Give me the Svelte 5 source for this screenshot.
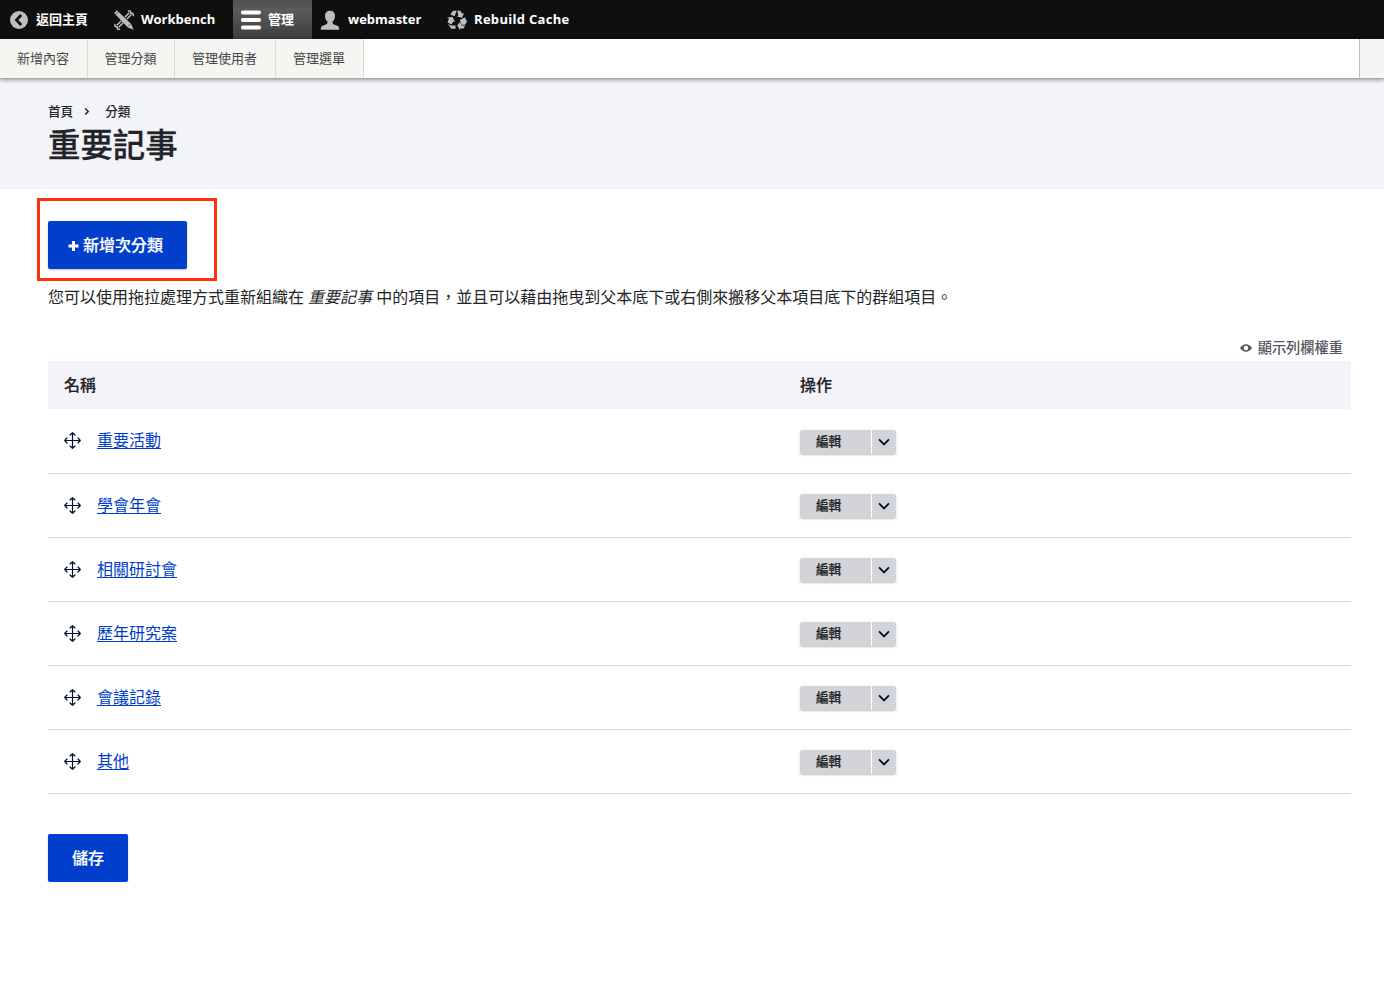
<script>
  const tray = [
    { label: '新增內容', width: 88 },
    { label: '管理分類', width: 87 },
    { label: '管理使用者', width: 101 },
    { label: '管理選單', width: 88 }
  ];
  const terms = ['重要活動', '學會年會', '相關研討會', '歷年研究案', '會議記錄', '其他'];
</script>

<nav class="bar">
  <a class="tab home" href="#home">
    <svg width="20" height="20" viewBox="0 0 20 20"><circle cx="10" cy="10" r="9" fill="#bebebe" /><path d="M12.2 5 7.4 10l4.8 5" fill="none" stroke="#0f0f0f" stroke-width="2.6" /></svg>
    <span>返回主頁</span>
  </a>
  <a class="tab bench" href="#workbench">
    <svg width="20" height="20" viewBox="0 0 20 20">
      <g fill="none" stroke="#bebebe" stroke-width="1.500"><path d="M11 7.100 15.300 2.800M12.900 9 17.200 4.700M14 1.300c1.700-1 3.200-.200 2.600 1.500l.700.700c1.600-.700 2.700.900 1.600 2.500M7.100 11 2.800 15.300M9 12.900 4.700 17.200M1.300 14c-1 1.700-.200 3.200 1.500 2.600l.700.700c-.700 1.600.900 2.700 2.500 1.600" /></g>
      <path d="M2.800.2 17.200 14l2.400 5.800-5.900-2.300L.2 3.100Z" fill="#bebebe" /><path d="m1.700 4.400 2.500-2.500M13.700 16.800l2.900-2.900" stroke="#0f0f0f" stroke-width=".6" />
    </svg>
    <span>Workbench</span>
  </a>
  <a class="tab manage" href="#manage">
    <svg width="20" height="20" viewBox="0 0 20 20" fill="#fff"><rect y=".5" width="20" height="4" rx="1.8" /><rect y="8" width="20" height="4" rx="1.8" /><rect y="15.5" width="20" height="4" rx="1.8" /></svg>
    <span>管理</span>
  </a>
  <a class="tab user" href="#user">
    <svg width="20" height="20" viewBox="0 0 20 20" fill="#bebebe"><path d="M10 .8c-3.3 0-5 2.2-5 5.1 0 2.2.9 4.3 2.3 5.4.5 1.8-.1 2.7-1.4 3.3l-3.2 1.2C1.1 16.5.8 17.6.8 19.7h18.4c0-2.100-.3-3.200-1.900-3.900l-3.200-1.200c-1.300-.600-1.900-1.500-1.400-3.300C14.100 10.200 15 8.100 15 5.900 15 3 13.300.8 10 .8Z" /></svg>
    <span>webmaster</span>
  </a>
  <a class="tab cache" href="#cache">
    <svg width="20" height="20" viewBox="0 0 20 20" fill="#bebebe">
      <path d="M6 .8h3.700L7.600 6.200 3.300 4.500Z" /><path d="M10.300.8h3l2 3 1.900-.7-2.200 4.700-5.200-1.200 1.500-1Z" />
      <path d="m18 7.300 2 4.600-2.200 2.800h-3.400l-1.600-4.800Z" /><path d="m10.200 15.500 3-4v1.900h1.200v2.200h4l-2 3H13v1.600Z" />
      <path d="m0 7.400 5.600-.5 2.400 5.200-1.800-.6-1.600 3.100L.6 12.500l1.300-3.700Z" /><path d="M.8 13.800 3.700 15.500h4.800v3.300H4.200Z" />
    </svg>
    <span>Rebuild Cache</span>
  </a>
</nav>
<div class="tray">
  {#each tray as item}<a href="#tray" style="width: {item.width}px">{item.label}</a>{/each}
  <div class="toggle"></div>
</div>

<header>
  <div class="crumbs"><span>首頁</span><svg width="6" height="8" viewBox="0 0 6 8"><path d="m1.200 1.500 3 3-3 3" fill="none" stroke="#222330" stroke-width="1.500" /></svg><span>分類</span></div>
  <h1>重要記事</h1>
</header>

<main>
  <div class="actions">
    <a class="primary add" href="#add"><svg width="11" height="10" viewBox="0 0 11 10"><path d="M5.500 0v10M.500 5h10" stroke="#fff" stroke-width="3" /></svg><span>新增次分類</span></a>
    <div class="highlight"></div>
  </div>
  <p>您可以使用拖拉處理方式重新組織在 <em>重要記事</em> 中的項目，並且可以藉由拖曳到父本底下或右側來搬移父本項目底下的群組項目。</p>
  <div class="weights">
    <svg width="12" height="8" viewBox="0 0 12 8"><path fill-rule="evenodd" d="M0 4C3-.900 9-.900 12 4 9 8.900 3 8.900 0 4Zm6-2.300a2.300 2.300 0 1 0 0 4.600 2.300 2.300 0 0 0 0-4.600Z" fill="#545560" /></svg>
    <span>顯示列欄權重</span>
  </div>
  <div class="head"><span>名稱</span><span>操作</span></div>
  {#each terms as term}
    <div class="row">
      <div class="name">
        <svg width="17" height="17" viewBox="0 0 17 17"><path d="M8.500.800v15.400M.800 8.500h15.400M6 3 8.500.700 11 3M6 14l2.500 2.300L11 14M3 6 .700 8.500 3 11M14 6l2.300 2.500L14 11" fill="none" stroke="#000f33" stroke-width="1.200" stroke-linecap="round" stroke-linejoin="round" /></svg>
        <a href="#term">{term}</a>
      </div>
      <div class="drop">
        <button class="edit">編輯</button>
        <button class="more" aria-label="更多"><svg width="12" height="8" viewBox="0 0 12 8"><path d="m1 1.400 5 5 5-5" fill="none" stroke="#000f33" stroke-width="1.900" /></svg></button>
      </div>
    </div>
  {/each}
  <button class="primary save">儲存</button>
</main>

<style>
  :global(body) { background: #fff; overflow: hidden; }
  :global(#app) { font-family: "Noto Sans CJK TC", sans-serif; color: #232429; font-size: 16px; }
  a { text-decoration: none; color: inherit; }
  button { border: 0; padding: 0; margin: 0; font: inherit; color: inherit; }
  svg { flex: none; display: block; }
  .bar { height: 39px; background: #0f0f0f; color: #fff; display: flex; font: bold 13px/36px "Open Sans", "Noto Sans CJK TC", sans-serif; }
  .tab { display: flex; align-items: center; box-sizing: border-box; height: 39px; white-space: nowrap; }
  .tab span { height: 38px; }
  .home { width: 114px; padding-left: 9px; gap: 7px; }
  .bench { width: 119px; gap: 7px; }
  .manage { width: 79px; padding-left: 8px; gap: 7px; background: linear-gradient(#4f4f4f 0%, #5b5b5b 25%, #3d3d3d 100%); }
  .user { width: 135px; padding-left: 8px; gap: 8px; }
  .cache { gap: 7px; letter-spacing: .3px; }
  .tray { height: 39px; display: flex; font-size: 13px; line-height: 37px; color: #464646; border-bottom: 1px solid #a9a9ad; box-shadow: 0 1px 4px rgba(0, 0, 0, .4); position: relative; background: #fff; }
  .tray a { box-sizing: border-box; text-align: center; background: #f5f5f2; border-right: 1px solid #dcdcdc; padding-right: 1px; }
  .toggle { margin-left: auto; width: 24px; background: #f5f5f5; border-left: 1px solid #bebebe; }
  header { height: 110px; background: #f3f4f9; padding: 22px 48px 0; box-sizing: border-box; }
  .crumbs { display: flex; align-items: center; font-size: 12.640px; line-height: 20px; font-weight: 500; height: 20px; }
  .crumbs svg { margin: 0 15px 0 11px; }
  h1 { margin: 0; font-size: 32.400px; line-height: 43px; font-weight: 500; -webkit-text-stroke: .3px; }
  main { padding: 32px 33px 0 48px; }
  .actions { position: relative; height: 48px; }
  .primary { display: flex; align-items: center; height: 48px; box-sizing: border-box; background: #003ecc; color: #fff; font-weight: 500; line-height: 46px; padding-bottom: 2px; border-radius: 2px; box-shadow: 0 1px 2px rgba(0, 0, 0, .25); -webkit-text-stroke: .2px; }
  .add { width: 139px; padding-left: 20px; gap: 4px; }
  .add svg { margin-top: 4px; }
  .highlight { position: absolute; left: -11px; top: -23px; width: 174px; height: 77px; border: 3px solid #fc300c; }
  p { margin: 15px 0 0; line-height: 24px; height: 24px; white-space: nowrap; }
  p em { margin: 0 .5px; }
  .weights { display: flex; justify-content: flex-end; align-items: center; gap: 6px; margin-top: 28px; height: 24px; padding-right: 8px; font-size: 14.220px; font-weight: 500; color: #545560; }
  .weights span { line-height: 22px; height: 24px; }
  .head, .row { display: grid; grid-template-columns: 736px 1fr; align-items: center; padding-left: 16px; box-sizing: border-box; }
  .head { height: 48px; margin-top: 1px; background: #f3f4f9; font-weight: 500; line-height: 46px; padding-bottom: 2px; -webkit-text-stroke: .2px; }
  .row { height: 64px; border-bottom: 1px solid #d3d4d9; }
  .head + .row { height: 65px; }
  .head + .row .name { margin-top: -2px; }
  .name { display: flex; align-items: center; gap: 16px; }
  .name a { color: #003ecc; line-height: 22px; height: 25px; text-decoration: underline; text-underline-offset: 2px; text-decoration-thickness: 1px; }
  .drop { display: flex; gap: 1px; width: 96px; margin-top: 1px; font-size: 12.640px; font-weight: 500; background: #fff; border-radius: 2px; box-shadow: 0 1px 2px rgba(0, 0, 0, .25); -webkit-text-stroke: .2px; }
  .drop button { height: 24px; background: #d3d4d9; }
  .edit { width: 71px; border-radius: 2px 0 0 2px; text-align: left; padding: 0 0 2px 16px !important; line-height: 20px; }
  .more { width: 24px; display: grid; place-items: center; border-radius: 0 2px 2px 0; }
  .save { width: 80px; justify-content: center; margin-top: 40px; }
</style>
